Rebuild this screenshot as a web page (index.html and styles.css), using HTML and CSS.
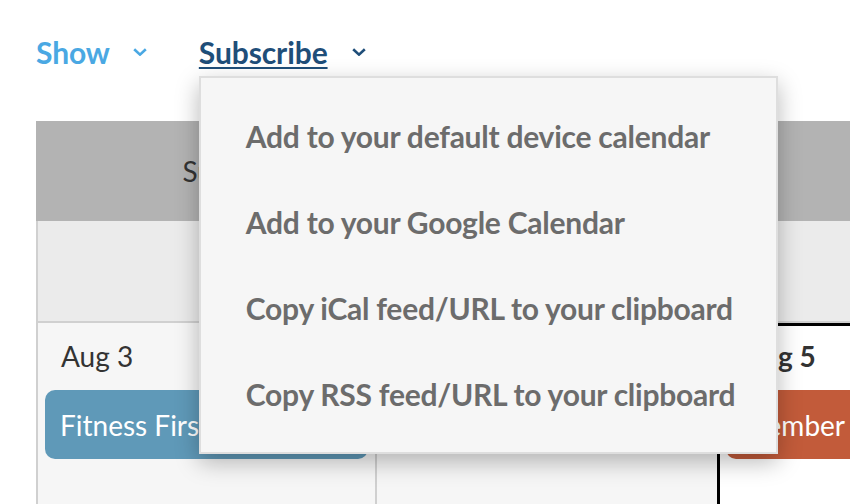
FILE: index.html
```html
<!DOCTYPE html>
<html lang="en">
<head>
<meta charset="utf-8">
<title>Events calendar</title>
<link rel="stylesheet" href="styles.css">
</head>
<body>
<div class="page">
  <nav class="nav">
    <div class="nav-item show">
      <span class="nav-label">Show</span>
      <svg class="chev" viewBox="0 0 14 8" width="14" height="8"><path d="M1.2 1.2 L7 6.6 L12.8 1.2" /></svg>
    </div>
    <div class="nav-item subscribe">
      <span class="nav-label">Subscribe</span>
      <svg class="chev" viewBox="0 0 14 8" width="14" height="8"><path d="M1.2 1.2 L7 6.6 L12.8 1.2" /></svg>
      <ul class="dropdown">
        <li class="dropdown-item">Add to your default device calendar</li>
        <li class="dropdown-item">Add to your Google Calendar</li>
        <li class="dropdown-item">Copy iCal feed/URL to your clipboard</li>
        <li class="dropdown-item">Copy RSS feed/URL to your clipboard</li>
      </ul>
    </div>
  </nav>

  <div class="cal">
    <div class="head-cell">Sun</div>
    <div class="head-cell">Mon</div>
    <div class="head-cell">Tue</div>

    <div class="sub-cell first"></div>
    <div class="sub-cell"></div>
    <div class="sub-cell"></div>

    <div class="day first">
      <div class="day-date">Aug 3</div>
      <div class="event event-blue">Fitness First Workout</div>
    </div>
    <div class="day">
      <div class="day-date">Aug 4</div>
    </div>
    <div class="day today">
      <div class="day-date">Aug 5</div>
      <div class="event event-orange">Member Meeting</div>
    </div>
  </div>
</div>
</body>
</html>
```

FILE: styles.css
```css
* { box-sizing: border-box; }

html, body {
  margin: 0;
  padding: 0;
  background: #ffffff;
}

body {
  width: 850px;
  height: 504px;
  overflow: hidden;
  font-family: "Lato", "Source Sans Pro", "Open Sans", sans-serif;
  color: #333333;
}

.page {
  width: 850px;
  height: 504px;
  overflow: hidden;
}

.nav {
  display: flex;
  align-items: center;
  padding: 35px 0 0 36px;
  height: 69px;
}

.nav-item {
  display: flex;
  align-items: center;
  font-size: 30px;
  font-weight: 700;
  line-height: 34px;
  letter-spacing: -0.1px;
}

.show {
  color: #4aa8e3;
  margin-right: 52px;
}

.show .chev {
  margin-left: 23px;
}

.subscribe {
  position: relative;
  color: #1f4e79;
}

.subscribe .nav-label {
  text-decoration: underline;
  text-decoration-thickness: 2px;
  text-underline-offset: 3px;
}

.chev {
  margin-left: 24px;
  fill: none;
  stroke: currentColor;
  stroke-width: 2.6;
  stroke-linecap: butt;
}

.dropdown {
  position: absolute;
  left: 0;
  top: calc(100% + 7px);
  width: 579px;
  margin: 0;
  padding: 15px 0 15px;
  list-style: none;
  background: #f6f6f6;
  border: 2px solid #dedede;
  box-shadow: 0 8px 22px rgba(0, 0, 0, 0.28);
  z-index: 10;
}

.dropdown-item {
  height: 86px;
  display: flex;
  align-items: center;
  padding-left: 45px;
  font-size: 30px;
  font-weight: 700;
  line-height: 32px;
  letter-spacing: -0.25px;
  color: #6c6c6c;
  white-space: nowrap;
}

.cal {
  margin: 52px 0 0 36px;
  display: grid;
  grid-template-columns: 339px 342px 340px;
  width: max-content;
}

.head-cell {
  height: 100px;
  background: #b3b3b3;
  display: flex;
  align-items: center;
  justify-content: center;
  font-size: 28px;
  color: #333333;
}

.sub-cell {
  height: 102px;
  background: #ebebeb;
  border-bottom: 2px solid #d0d0d0;
  border-left: 2px solid #d0d0d0;
}

.day {
  height: 200px;
  background: #f6f6f6;
  border-left: 2px solid #d0d0d0;
  padding: 17px 0 0 6px;
}

.day-date {
  padding-left: 17px;
  font-size: 28px;
  line-height: 32px;
  color: #333333;
  margin-bottom: 18px;
}

.today {
  background: #ffffff;
  border-left: 3px solid #000000;
  border-top: 3px solid #000000;
  padding-top: 14px;
}

.today .day-date {
  font-weight: 700;
}

.event {
  height: 69px;
  border-radius: 10px;
  display: flex;
  align-items: center;
  padding-left: 15px;
  font-size: 28px;
  line-height: 32px;
  color: #ffffff;
  white-space: nowrap;
  overflow: hidden;
}

.event-blue {
  width: 323px;
  margin-left: 1px;
  background: #5f99b8;
}

.event-orange {
  width: 330px;
  background: #c25b3a;
}
```
